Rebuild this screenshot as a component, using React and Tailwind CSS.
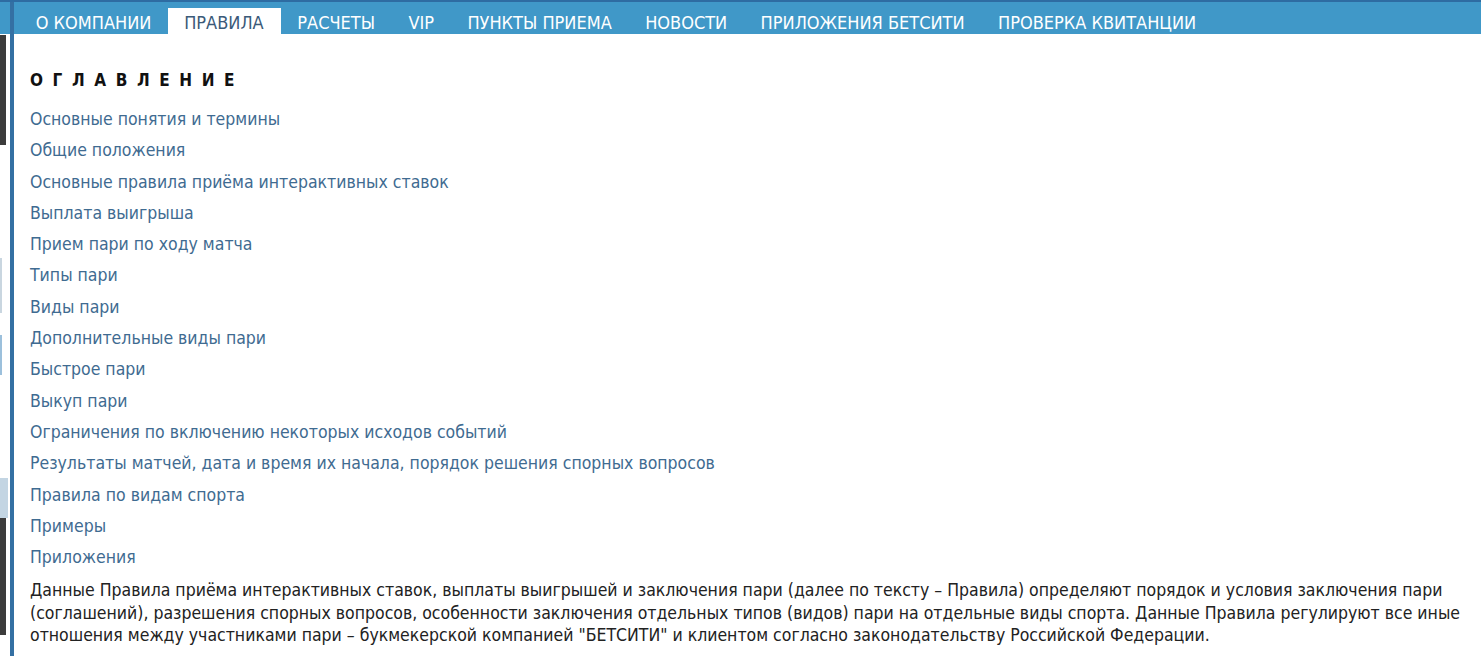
import React from "react";

const navItems = [
  "О КОМПАНИИ",
  "ПРАВИЛА",
  "РАСЧЕТЫ",
  "VIP",
  "ПУНКТЫ ПРИЕМА",
  "НОВОСТИ",
  "ПРИЛОЖЕНИЯ БЕТСИТИ",
  "ПРОВЕРКА КВИТАНЦИИ",
];

const contents = [
  "Основные понятия и термины",
  "Общие положения",
  "Основные правила приёма интерактивных ставок",
  "Выплата выигрыша",
  "Прием пари по ходу матча",
  "Типы пари",
  "Виды пари",
  "Дополнительные виды пари",
  "Быстрое пари",
  "Выкуп пари",
  "Ограничения по включению некоторых исходов событий",
  "Результаты матчей, дата и время их начала, порядок решения спорных вопросов",
  "Правила по видам спорта",
  "Примеры",
  "Приложения",
];

const font = "font-['DejaVu_Sans_Condensed','Liberation_Sans',sans-serif]";

const LeftStrip = () => (
  <div className="flex w-[10px] shrink-0 flex-col bg-white">
    <div className="h-[32px] bg-[#4098c8]" />
    <div className="mt-[1px] h-[110px] w-[6px] bg-[#3c3c3c]" />
    <div className="mt-[113px] h-[55px] w-[2px] bg-[#c9d6e0]" />
    <div className="mt-[22px] h-[40px] w-[2px] bg-[#9cc0dc]" />
    <div className="mt-[103px] h-[40px] w-[8px] bg-[#c3d5e3]" />
    <div className="h-[117px] w-[6px] bg-[#3c3c3c]" />
  </div>
);

export default function App() {
  return (
    <div className={`flex min-h-[656px] flex-col bg-white ${font}`}>
      <div className="h-[2px] bg-[#2e6ca2]" />
      <div className="flex flex-1">
        <LeftStrip />
        <div className="w-[4px] shrink-0 bg-[#3470a3]" />
        <div className="min-w-0 flex-1">
          <nav className="flex h-[32px] items-end whitespace-nowrap bg-[#4098c8] pl-[5px]">
            {navItems.map((item) => (
              <a
                key={item}
                href="#"
                className={
                  item === "ПРАВИЛА"
                    ? "flex h-[26px] items-center bg-white pl-4 pr-[17px] pt-[3px] text-[18px] text-[#3b5a79]"
                    : "flex h-[26px] items-center px-[16.7px] pt-[3px] text-[18px] text-white"
                }
              >
                {item}
              </a>
            ))}
          </nav>
          <div className="pl-4 pr-[13px] pt-[35px]">
            <h2 className="text-[17px] font-bold leading-[22px] tracking-[9.6px] text-[#111]">
              ОГЛАВЛЕНИЕ
            </h2>
            <ul className="mt-[13px]">
              {contents.map((item) => (
                <li key={item} className="leading-[31.3px]">
                  <a href="#" className="text-[17.5px] text-[#3f6b91]">
                    {item}
                  </a>
                </li>
              ))}
            </ul>
            <p className="mt-[6px] text-[17.5px] leading-[22.5px] text-[#222]">
              Данные Правила приёма интерактивных ставок, выплаты выигрышей и заключения пари (далее по тексту – Правила)
              определяют порядок и условия заключения пари (соглашений), разрешения спорных вопросов, особенности
              заключения отдельных типов (видов) пари на отдельные виды спорта. Данные Правила регулируют все иные
              отношения между участниками пари – букмекерской компанией "БЕТСИТИ" и клиентом согласно законодательству
              Российской Федерации.
            </p>
          </div>
        </div>
      </div>
    </div>
  );
}
